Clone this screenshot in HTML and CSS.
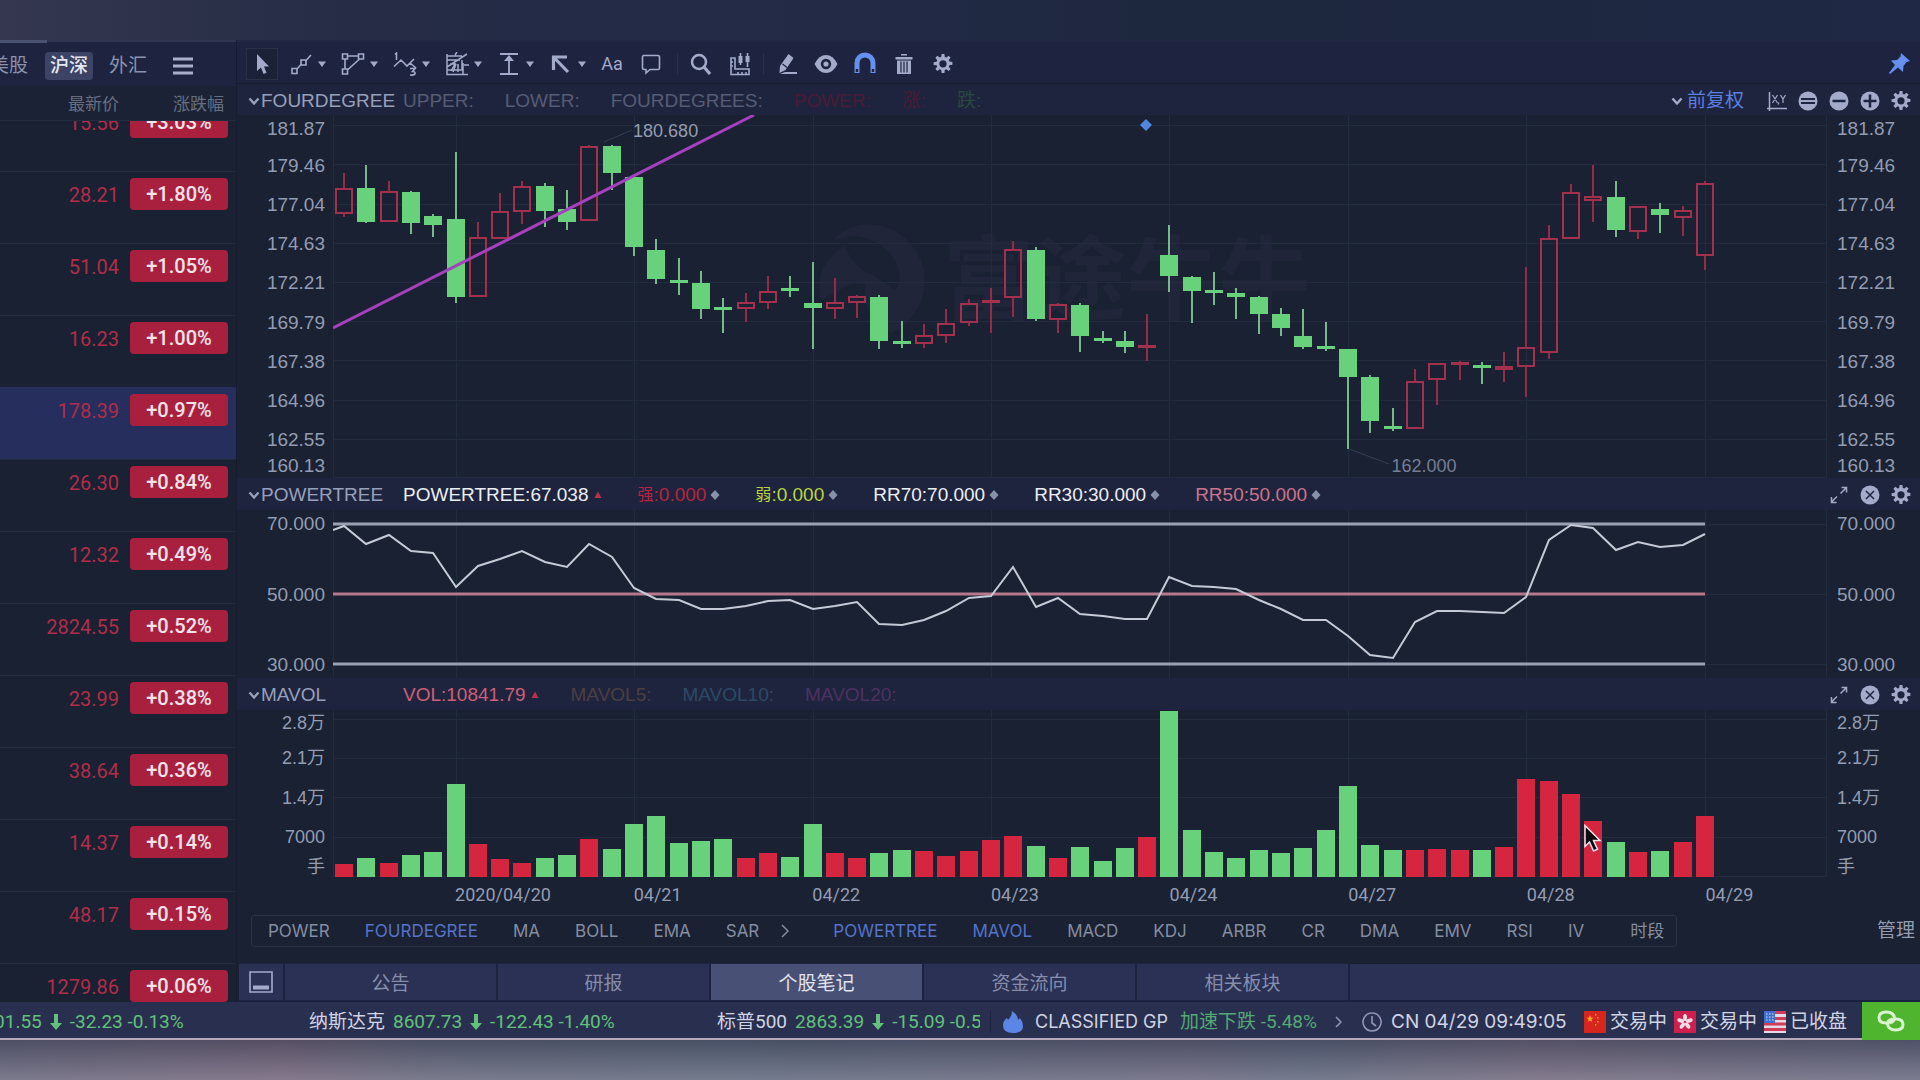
FILE: index.html
```html
<!DOCTYPE html>
<html lang="zh-CN">
<head>
<meta charset="utf-8">
<meta name="viewport" content="width=device-width, initial-scale=1">
<title>行情</title>
<link rel="stylesheet" href="styles.css">
</head>
<body>
<svg class="defs" aria-hidden="true">
  <symbol id="i-gear" viewBox="0 0 20 20"><path fill-rule="evenodd" fill="currentColor" d="M8.6 0h2.8l.4 2.9 1.5.6 2.3-1.8 2 2-1.8 2.3.7 1.6 2.9.4v2.8l-2.9.4-.7 1.6 1.8 2.3-2 2-2.3-1.8-1.5.7-.4 3H8.600l-.4-3-1.500-.7-2.300 1.800-2-2 1.800-2.300-.7-1.600L.6 11V8.200l2.900-.4.7-1.600L2.400 3.800l2-2 2.300 1.800 1.500-.7zM10 6.200a3.600 3.600 0 1 0 0 7.200 3.600 3.600 0 0 0 0-7.200z"/></symbol>
  <symbol id="i-chev" viewBox="0 0 12 10"><path d="M1.500 2.500 6 7.500l4.500-5" fill="none" stroke="currentColor" stroke-width="2.400"/></symbol>
  <symbol id="i-caret" viewBox="0 0 10 8"><path d="M1 1.500h8L5 7z" fill="currentColor"/></symbol>
  <symbol id="i-expand" viewBox="0 0 20 20"><path d="M11.500 8.500 17 3M12.500 2.500H17.500V7.500M8 11.500 2.500 17M2.500 12v5.500h5" fill="none" stroke="currentColor" stroke-width="1.500"/></symbol>
  <symbol id="i-close" viewBox="0 0 20 20"><circle cx="10" cy="10" r="9.500" fill="currentColor"/><path d="m6 6 8 8M14 6l-8 8" stroke="#1f2440" stroke-width="1.500"/></symbol>
  <symbol id="i-tri" viewBox="0 0 10 10"><path d="M5 1.500 8.500 8h-7z" fill="#b8324e"/></symbol>
  <symbol id="i-dia" viewBox="0 0 10 10"><path d="m5 0 4.500 5L5 10 .5 5z" fill="#8791a8"/></symbol>
  <symbol id="i-down" viewBox="0 0 12 18"><path d="M4 1h4v9h4l-6 7-6-7h4z" fill="currentColor"/></symbol>
</svg>

<div class="backdrop backdrop-top"></div>

<div class="app">
  <aside class="watch">
    <nav class="markets">
      <button class="market">美股</button>
      <button class="market is-on">沪深</button>
      <button class="market">外汇</button>
      <button class="menu" aria-label="菜单"><svg viewBox="0 0 20 18"><path d="M0 2h20M0 9h20M0 16h20" stroke="currentColor" stroke-width="3"/></svg></button>
    </nav>
    <div class="quotes" id="quotes">
      <table>
        <thead><tr><th>最新价</th><th class="pct">涨跌幅</th></tr></thead>
        <tbody>
          <tr><td>15.56</td><td><span class="tag">+3.03%</span></td></tr>
          <tr><td>28.21</td><td><span class="tag">+1.80%</span></td></tr>
          <tr><td>51.04</td><td><span class="tag">+1.05%</span></td></tr>
          <tr><td>16.23</td><td><span class="tag">+1.00%</span></td></tr>
          <tr class="is-on"><td>178.39</td><td><span class="tag">+0.97%</span></td></tr>
          <tr><td>26.30</td><td><span class="tag">+0.84%</span></td></tr>
          <tr><td>12.32</td><td><span class="tag">+0.49%</span></td></tr>
          <tr><td>2824.55</td><td><span class="tag">+0.52%</span></td></tr>
          <tr><td>23.99</td><td><span class="tag">+0.38%</span></td></tr>
          <tr><td>38.64</td><td><span class="tag">+0.36%</span></td></tr>
          <tr><td>14.37</td><td><span class="tag">+0.14%</span></td></tr>
          <tr><td>48.17</td><td><span class="tag">+0.15%</span></td></tr>
          <tr><td>1279.86</td><td><span class="tag">+0.06%</span></td></tr>
        </tbody>
      </table>
    </div>
  </aside>

  <main class="board">
    <div class="toolbar">
      <button class="tool pick" aria-label="选择"><svg viewBox="0 0 24 24"><path d="M7 2v17l4-3.500L13.500 22l3-1.200L14 14.500h5z" fill="currentColor"/></svg></button>
      <button class="tool drop" aria-label="线段"><svg viewBox="0 0 24 24"><g fill="none" stroke="currentColor" stroke-width="1.600"><path d="M3 16.500h5v5H3zM12 8h5v5h-5zM8 17l4-4.500M17 8.500 22 3"/></g></svg><svg class="caret"><use href="#i-caret"/></svg></button>
      <button class="tool drop" aria-label="形状"><svg viewBox="0 0 24 24"><g fill="none" stroke="currentColor" stroke-width="1.600"><path d="M1.500 2h5v5h-5zM17.500 2h5v5h-5zM1.500 17h5v5h-5zM6.500 4h11M4 7v10M6.500 18 18.500 7"/></g></svg><svg class="caret"><use href="#i-caret"/></svg></button>
      <button class="tool drop" aria-label="波浪"><svg viewBox="0 0 24 24"><path d="M1 14.500 8 8l6 6 3-3 6 5M17 11l4-4M2 2.500 3.500 1v7M17 16.500h5l-2.500 3q3 0 2.500 2-.5 2-5 1.500" fill="none" stroke="currentColor" stroke-width="1.600"/></svg><svg class="caret"><use href="#i-caret"/></svg></button>
      <button class="tool drop" aria-label="分割线"><svg viewBox="0 0 24 24"><g fill="none" stroke="currentColor" stroke-width="1.500"><path d="M2 2v20.500h21M2 4h15M2 8h13M2 18h15V8M10 3 12 0M2 15 22 2M18 22V11M19 13h5M5 12h5l-4 7M11 12l-3 8M13 12v8"/></g></svg><svg class="caret"><use href="#i-caret"/></svg></button>
      <button class="tool drop" aria-label="测量"><svg viewBox="0 0 24 24"><path d="M3 2h18M3 22h18M12 5v17" stroke="currentColor" stroke-width="1.800"/><path d="m12 3 5 6H7z" fill="currentColor"/></svg><svg class="caret"><use href="#i-caret"/></svg></button>
      <button class="tool drop" aria-label="箭头"><svg viewBox="0 0 24 24"><path d="M5 5.500 19 20M4.500 18V5H18" fill="none" stroke="currentColor" stroke-width="3.200"/></svg><svg class="caret"><use href="#i-caret"/></svg></button>
      <button class="tool text">Aa</button>
      <button class="tool note" aria-label="标注"><svg viewBox="0 0 24 24"><path d="M4 3.500h15q1.500 0 1.500 1.500v11q0 1.500-1.500 1.500h-8L7 21v-3.500H5Q3.500 17.500 3.500 16V5Q3.500 3.500 5 3.500" fill="none" stroke="currentColor" stroke-width="1.600"/></svg></button>
      <i class="split"></i>
      <button class="tool" aria-label="搜索"><svg viewBox="0 0 24 24"><circle cx="10" cy="10" r="7" fill="none" stroke="currentColor" stroke-width="2.500"/><path d="m15 15 6 7" stroke="currentColor" stroke-width="3.200"/></svg></button>
      <button class="tool" aria-label="K线测量"><svg viewBox="0 0 24 24"><path d="M3 6h4v11h14v5.500H3zM10 20v2M14 20v2M18 20v2M3 10h2M3 14h2M12.500 1v12M19.500 1v14" fill="none" stroke="currentColor" stroke-width="1.600"/><path d="M10.500 4h4v7h-4zM17.500 4h4v6h-4z" fill="currentColor"/></svg></button>
      <i class="split"></i>
      <button class="tool" aria-label="画笔"><svg viewBox="0 0 24 24"><path d="m13.500 2 5 4-8 12-6 3 .5-7zM10 20h12v2H5z" fill="currentColor"/><path d="m7.500 12 4.500 3.500" stroke="#1e2440" stroke-width="1.200"/></svg></button>
      <button class="tool" aria-label="显示"><svg viewBox="0 0 24 24"><path d="M.5 12Q5 3 12 3T23.500 12Q19 21 12 21T.5 12" fill="currentColor"/><circle cx="12" cy="12" r="5.200" fill="#1e2440"/><circle cx="12" cy="12" r="2.600" fill="currentColor"/></svg></button>
      <button class="tool magnet" aria-label="磁铁"><svg viewBox="0 0 24 24"><path d="M4 21V11a8 8 0 0 1 16 0v10" fill="none" stroke="currentColor" stroke-width="5"/><path d="M2.800 17h2.400v3H2.800zM18.800 17h2.400v3h-2.400z" fill="#1e2440"/></svg></button>
      <button class="tool" aria-label="删除"><svg viewBox="0 0 24 24"><path d="M9 2h6v1.500H9zM3.500 5h17v2.500h-17zM5 8.500h14V22H5z" fill="currentColor"/><path d="M9 9.500v11M12 9.500v11M15 9.500v11" stroke="#1e2440" stroke-width="1.200"/></svg></button>
      <button class="tool" aria-label="设置"><svg class="small"><use href="#i-gear"/></svg></button>
      <button class="tool pin" aria-label="固定"><svg viewBox="0 0 24 24"><path d="m14 1 9 8-3.500 1-3 4-.5 6-5-4.500L3 22l-1-1 6-8-4-4.500 6-.5 3.500-3.500z" fill="currentColor"/></svg></button>
    </div>

    <div class="head first">
      <button class="name"><svg><use href="#i-chev"/></svg>FOURDEGREE</button>
      <span class="dim">UPPER:</span><span class="dim">LOWER:</span><span class="dim">FOURDEGREES:</span>
      <span class="dim-red">POWER:</span><span class="dim-red">涨:</span><span class="dim-green">跌:</span>
      <div class="acts">
        <button class="adjust"><svg class="chev"><use href="#i-chev"/></svg>前复权</button>
        <button aria-label="坐标"><svg viewBox="0 0 20 20"><path d="M2.500 1v19M0 17.500h20" stroke="currentColor" stroke-width="1.500"/><path d="m5.500 4 5 8M10.500 4l-5 8M12 11.500l-1 2M13.500 4l2.500 4 2.500-4M16 8v4" fill="none" stroke="currentColor" stroke-width="1.200"/></svg></button>
        <button aria-label="还原"><svg viewBox="0 0 20 20"><circle cx="10" cy="10" r="9.500" fill="currentColor"/><path d="M3 8h14M3 12h14" stroke="#1f2440" stroke-width="1.800"/></svg></button>
        <button aria-label="缩小"><svg viewBox="0 0 20 20"><circle cx="10" cy="10" r="9.500" fill="currentColor"/><path d="M3.500 10h13" stroke="#1f2440" stroke-width="2.500"/></svg></button>
        <button aria-label="放大"><svg viewBox="0 0 20 20"><circle cx="10" cy="10" r="9.500" fill="currentColor"/><path d="M3.500 10h13M10 3.500v13" stroke="#1f2440" stroke-width="2.500"/></svg></button>
        <button aria-label="设置"><svg><use href="#i-gear"/></svg></button>
      </div>
    </div>

    <section class="panel price">
      <div class="axis left"><span>181.87</span><span>179.46</span><span>177.04</span><span>174.63</span><span>172.21</span><span>169.79</span><span>167.38</span><span>164.96</span><span>162.55</span><span>160.13</span></div>
      <div class="plot">
        <div class="mark" aria-hidden="true">
          <svg viewBox="0 0 116 116"><path fill-rule="evenodd" fill="currentColor" d="M58 0a57 57 0 0 1 22 109q-12-4-22-22-6-14-4-26-14-4-26 6L10 76Q2 40 34 22q8 22 30 30l20 14q8-8 2-26Q72 14 40 12L22 16Q38 0 58 0z"/></svg>
          <span>富途牛牛</span>
        </div>
        <svg id="candles" viewBox="0 115 1493 363" preserveAspectRatio="none"></svg>
        <span class="peak">180.680</span>
        <span class="trough">162.000</span>
      </div>
      <div class="axis"><span>181.87</span><span>179.46</span><span>177.04</span><span>174.63</span><span>172.21</span><span>169.79</span><span>167.38</span><span>164.96</span><span>162.55</span><span>160.13</span></div>
    </section>

    <div class="head values">
      <button class="name"><svg><use href="#i-chev"/></svg>POWERTREE</button>
      <span class="white">POWERTREE:67.038<svg><use href="#i-tri"/></svg></span>
      <span class="red"><b>强</b>:0.000<svg><use href="#i-dia"/></svg></span>
      <span class="lime"><b>弱</b>:0.000<svg><use href="#i-dia"/></svg></span>
      <span class="white">RR70:70.000<svg><use href="#i-dia"/></svg></span>
      <span class="white">RR30:30.000<svg><use href="#i-dia"/></svg></span>
      <span class="pink">RR50:50.000<svg><use href="#i-dia"/></svg></span>
      <div class="acts">
        <button aria-label="展开"><svg><use href="#i-expand"/></svg></button>
        <button aria-label="关闭"><svg><use href="#i-close"/></svg></button>
        <button aria-label="设置"><svg><use href="#i-gear"/></svg></button>
      </div>
    </div>

    <section class="panel power">
      <div class="axis left"><span>70.000</span><span>50.000</span><span>30.000</span></div>
      <div class="plot"><svg id="power" viewBox="0 510 1493 168" preserveAspectRatio="none"></svg></div>
      <div class="axis"><span>70.000</span><span>50.000</span><span>30.000</span></div>
    </section>

    <div class="head">
      <button class="name"><svg><use href="#i-chev"/></svg>MAVOL</button>
      <span class="vol">VOL:10841.79<svg><use href="#i-tri"/></svg></span>
      <span class="brown">MAVOL5:</span><span class="teal">MAVOL10:</span><span class="plum">MAVOL20:</span>
      <div class="acts">
        <button aria-label="展开"><svg><use href="#i-expand"/></svg></button>
        <button aria-label="关闭"><svg><use href="#i-close"/></svg></button>
        <button aria-label="设置"><svg><use href="#i-gear"/></svg></button>
      </div>
    </div>

    <section class="panel volume">
      <div class="axis left"><span>2.8万</span><span>2.1万</span><span>1.4万</span><span>7000</span><span>手</span></div>
      <div class="plot">
        <svg id="volume" viewBox="0 710 1493 167" preserveAspectRatio="none"></svg>
        <svg class="pointer" viewBox="0 0 18 28" aria-hidden="true"><path d="M1 1.500v21l4.500-4.500 4 9 4-1.800-4-8.700h6.500z" fill="#0b0b10" stroke="#e8e4ec" stroke-width="1.500"/></svg>
      </div>
      <div class="axis"><span>2.8万</span><span>2.1万</span><span>1.4万</span><span>7000</span><span>手</span></div>
    </section>

    <div class="dates"><i></i><span>2020/04/20</span><span>04/21</span><span>04/22</span><span>04/23</span><span>04/24</span><span>04/27</span><span>04/28</span><span>04/29</span></div>

    <div class="picker">
      <div class="list">
        <button>POWER</button><button class="is-on">FOURDEGREE</button><button>MA</button><button>BOLL</button><button>EMA</button><button>SAR</button>
        <button class="more" aria-label="更多"><svg viewBox="0 0 8 14"><path d="m1 1 6 6-6 6" fill="none" stroke="currentColor" stroke-width="1.500"/></svg></button>
        <button class="is-on">POWERTREE</button><button class="is-on">MAVOL</button><button>MACD</button><button>KDJ</button><button>ARBR</button><button>CR</button><button>DMA</button><button>EMV</button><button>RSI</button><button>IV</button><button class="period">时段</button>
      </div>
      <button class="manage">管理</button>
    </div>

    <nav class="tabs">
      <button class="fold" aria-label="收起"><svg viewBox="0 0 24 22"><path d="M1 1h22v20H1z" fill="none" stroke="currentColor" stroke-width="1.600"/><path d="M4 14.500h16v4H4z" fill="currentColor"/></svg></button>
      <button>公告</button><button>研报</button><button class="is-on">个股笔记</button><button>资金流向</button><button>相关板块</button>
    </nav>
  </main>

  <footer class="status">
    <div class="ticker">
      <p><span class="idx">道琼斯</span><span>24101.55</span><svg><use href="#i-down"/></svg><span>-32.23 -0.13%</span></p>
      <p><span class="idx">纳斯达克</span><span>8607.73</span><svg><use href="#i-down"/></svg><span>-122.43 -1.40%</span></p>
      <p><span class="idx">标普500</span><span>2863.39</span><svg><use href="#i-down"/></svg><span>-15.09 -0.52%</span></p>
    </div>
    <div class="alert">
      <svg class="flame" viewBox="0 0 20 22"><path d="M9 0q6 4 6 9l2-2q3 4 3 8 0 7-10 7T0 14q0-4 4-7l1 2q4-4 4-9z" fill="#5b86e6"/></svg>
      <span class="stock">CLASSIFIED GP</span><span class="drop-text">加速下跌 -5.48%</span>
    </div>
    <svg class="next" viewBox="0 0 8 14"><path d="m1 2 5 5-5 5" fill="none" stroke="currentColor" stroke-width="1.500"/></svg>
    <svg class="clock" viewBox="0 0 20 20"><path d="M10 1a9 9 0 1 0 .1 0M10 4v7l4 3" fill="none" stroke="currentColor" stroke-width="1.600"/></svg>
    <time>CN 04/29 09:49:05</time>
    <ul class="sessions">
      <li><svg viewBox="0 0 22 22"><path d="M0 0h22v22H0z" fill="#d8261f"/><path d="m6 4 1 2.500 2.500.2-2 1.600.7 2.500L6 9.500l-2.200 1.300.7-2.500-2-1.600L5 6.500z" fill="#f3a52a"/><path d="M11 3h1.500v1.500H11zM13 6h1.500v1.500H13zM13 10h1.500v1.500H13zM11 13h1.500v1.500H11z" fill="#f3a52a"/></svg>交易中</li>
      <li><svg viewBox="0 0 22 22"><path d="M0 0h22v22H0z" fill="#cf1f4e"/><g fill="#f1dfe8"><ellipse cx="11" cy="6.500" rx="2" ry="3.500"/><ellipse cx="11" cy="6.500" rx="2" ry="3.500" transform="rotate(72 11 11)"/><ellipse cx="11" cy="6.500" rx="2" ry="3.500" transform="rotate(144 11 11)"/><ellipse cx="11" cy="6.500" rx="2" ry="3.500" transform="rotate(216 11 11)"/><ellipse cx="11" cy="6.500" rx="2" ry="3.500" transform="rotate(288 11 11)"/></g></svg>交易中</li>
      <li><svg viewBox="0 0 22 22"><path d="M0 0h22v22H0z" fill="#e3dbe6"/><path d="M0 1.500h22M0 7.500h22M0 13h22M0 18.500h22" stroke="#d23a55" stroke-width="2.800"/><path d="M0 0h11v12H0z" fill="#3e6fd0"/><path d="M2 3h8M2 6h8M2 9h8" stroke="#d8def0" stroke-width="1.200" stroke-dasharray="1.500 1.500"/></svg>已收盘</li>
    </ul>
    <button class="link" aria-label="连接"><svg viewBox="0 0 28 22"><g fill="none" stroke="#d9f5cf" stroke-width="3"><path d="M17.500 8.500Q17 2 9.500 2 2 2 2 7.500 2 13 9 13q2 0 3-1"/><path d="M10.500 13.500Q11 20 18.500 20q7.500 0 7.500-5.500Q26 9 19 9q-2 0-3 1"/><path d="M17.500 7.500q0 4.500-5 5.500M10.500 14.500q0-4.500 5-5.500"/></g></svg></button>
  </footer>
</div>

<div class="backdrop backdrop-bottom"></div>
<script src="script.js"></script>
</body>
</html>
```
FILE: styles.css
```css
* { box-sizing: border-box; }

:root {
  --bg: #192132;
  --bar: #1f243e;
  --ink: #949cb2;
  --icon: #a3aaca;
  --blue: #5a7fe0;
  --green: #67d27b;
  --red: #d6263f;
  --grid: #212d3e;
  --num: "Liberation Sans", "Noto Sans CJK SC", sans-serif;
  --ui: Roboto, "Noto Sans CJK SC", sans-serif;
}

body {
  margin: 0;
  min-height: 100vh;
  display: grid;
  grid-template-rows: 40px minmax(0, 1fr) 40px;
  height: 100vh;
  background: var(--bg);
  color: var(--ink);
  font: 18px/20px var(--ui);
  overflow: hidden;
}

button {
  padding: 0;
  border: 0;
  background: none;
  color: inherit;
  font: inherit;
  white-space: nowrap;
}

svg { display: block; flex: none; }
.defs { position: absolute; width: 0; height: 0; }

.backdrop-top { background: linear-gradient(90deg, #34374f 0, #262c46 18%, #222a46 45%, #1d273d 62%, #1f2844 100%); }
.backdrop-bottom { background: linear-gradient(180deg, rgba(50, 54, 76, .6), rgba(130, 128, 146, .5)), linear-gradient(90deg, #77758a, #8c7488 15%, #74788a 22%, #68788a 38%, #77758c 62%, #6b788c 68%, #88788c 80%, #777a90); }

.app {
  display: grid;
  grid-template-columns: 237px minmax(0, 1fr);
  grid-template-rows: minmax(0, 1fr) 38px;
  min-height: 0;
}

/* Watch list */
.watch {
  display: flex;
  flex-direction: column;
  min-height: 0;
  border-right: 1px solid #161d2e;
}
.markets {
  display: flex;
  align-items: center;
  height: 46px;
  flex: none;
  gap: 12px;
  padding: 4px 0 0 45px;
  border-top: 2px solid #2f3654;
  background: #1e243f;
  position: relative;
}
.markets::before {
  content: "";
  position: absolute;
  left: 0;
  top: -2px;
  width: 47px;
  height: 3px;
  background: #4a5270;
}
.market { font-size: 19px; line-height: 28px; padding: 0 4px; border-radius: 4px; color: #8b92ac; }
.market:first-child { margin: 0 1px 0 -59px; }
.market.is-on { background: #3d4364; color: #e4e6f2; padding: 0 5px; font-weight: 500; }
.menu { color: #a9afcb; margin-left: 10px; }
.menu svg { width: 20px; height: 18px; }

.quotes { flex: 1; min-height: 0; overflow: hidden; }
.quotes table { width: 100%; border-collapse: separate; border-spacing: 0; table-layout: fixed; }
.quotes th {
  position: sticky;
  top: 0;
  z-index: 1;
  width: 119px;
  height: 35px;
  padding: 2px 0 0;
  background: #1b2235;
  border-bottom: 1px solid #222c3f;
  color: #666f82;
  font-size: 17px;
  font-weight: 400;
  text-align: right;
}
.quotes th.pct { width: auto; padding-right: 12px; }
.quotes td {
  height: 72px;
  padding: 7px 0 0;
  vertical-align: top;
  border-top: 1px solid #202b3b;
  color: #b12d4a;
  font-size: 20px;
  line-height: 32px;
  text-align: right;
}
.quotes td + td { padding: 6px 8px 0 11px; }
.tag {
  display: block;
  border-radius: 4px;
  background: #a9203f;
  color: #f6e4ea;
  font-weight: 500;
  text-align: center;
}
.quotes tr.is-on td { background: #262e5e; border-color: #262e5e; }

/* Chart board */
.board { display: flex; flex-direction: column; min-width: 0; min-height: 0; }

.toolbar {
  display: flex;
  align-items: center;
  height: 44px;
  flex: none;
  padding: 2px 9px 0;
  border-top: 2px solid #222943;
  border-bottom: 1px solid #171d30;
  background: #1e2440;
  color: var(--icon);
}
.tool { display: flex; align-items: center; justify-content: center; width: 39px; height: 32px; flex: none; }
.tool svg { width: 24px; height: 24px; }
.tool svg.small { width: 20px; height: 20px; }
.tool.pick { width: 32px; border: 1px solid #2a3145; background: #1b2136; margin-right: 6px; }
.tool.drop { width: 52px; justify-content: flex-start; padding-left: 5px; gap: 4px; }
.tool svg.caret { width: 10px; height: 8px; }
.tool.text { width: 32px; font: 18px/20px var(--ui); }
.tool.note { width: 45px; }
.tool.magnet, .tool.pin { color: #6690f0; }
.tool.pin { width: 24px; margin-left: auto; }
.split { width: 8px; height: 22px; flex: none; background: linear-gradient(#2b3250, #2b3250) center / 1px 100% no-repeat; }

.head {
  display: flex;
  align-items: center;
  gap: 31px;
  height: 32px;
  flex: none;
  padding: 2px 9px 0 11px;
  background: var(--bar);
  font: 19px/20px var(--num);
  white-space: nowrap;
}
.head.first { height: 31px; }
.head.values { gap: 35px; }
.head .name { display: flex; align-items: center; width: 155px; margin-right: -31px; gap: 1px; flex: none; color: #97a0bb; }
.head.values .name { margin-right: -35px; }
.head .name svg { width: 12px; height: 10px; }
.head span { display: flex; align-items: center; gap: 4px; }
.head span svg { width: 10px; height: 10px; }
.head b { font-size: 16px; font-weight: 400; margin-right: -4px; }
.dim { color: #555c73; }
.dim-red { color: #4a1b36; }
.dim-green { color: #28483e; }
.white { color: #eceef5; }
.red { color: #b8233f; }
.lime { color: #b7d53a; }
.pink { color: #c9748c; }
.vol { color: #cc5f79; }
.brown { color: #4b3f42; }
.teal { color: #2c4a66; }
.plum { color: #4c3262; }
.acts { display: flex; align-items: center; gap: 11px; margin-left: auto; color: var(--icon); }
.acts svg { width: 20px; height: 20px; }
.acts .adjust { display: flex; align-items: center; gap: 4px; margin-right: 12px; color: var(--blue); font-size: 19px; }
.acts .chev { width: 12px; height: 10px; color: var(--icon); }

.panel {
  display: grid;
  grid-template-columns: 96px minmax(0, 1fr) 93px;
  grid-template-rows: minmax(0, 1fr);
  min-height: 0;
}
.price { flex: 363 1 0; }
.power { flex: 168 1 0; }
.volume { flex: 167 1 0; }
.plot { position: relative; min-width: 0; border-right: 1px solid var(--grid); }
.plot > svg { width: 100%; height: 100%; }
.axis { display: flex; flex-direction: column; padding-left: 10px; font: 19px/20px var(--num); }
.axis.left { padding: 0 8px 0 0; text-align: right; }
.axis span { flex: 1; display: grid; align-content: center; min-height: 0; }
.price .axis span:first-child { flex: none; height: 31px; padding-bottom: 4px; }
.price .axis span:last-child { flex: none; height: 18px; padding-bottom: 6px; }
.power .axis { justify-content: space-between; padding-top: 4px; padding-bottom: 3px; }
.power .axis span { flex: none; }
.volume .axis span:first-child { flex: none; height: 28px; padding-bottom: 3px; }
.volume .axis span:last-child { flex: none; height: 20px; }
.volume .axis { font-size: 18px; }

.mark { position: absolute; left: 32%; top: 30%; display: flex; align-items: center; gap: 16px; color: #202539; font: 700 92px/116px var(--ui); white-space: nowrap; }
.mark svg { width: 116px; height: 116px; }
.plot > #candles { position: relative; }
.peak, .trough { position: absolute; font: 18px/20px var(--num); }
.peak { left: 20.1%; top: 6px; }
.trough { left: 70.9%; bottom: 2px; color: #757e95; }
.plot > .pointer { position: absolute; left: 83.800%; top: 114px; width: 18px; height: 28px; }

.dates { display: grid; grid-template-columns: 244fr repeat(7, 357fr) 243fr; margin: 0 93px 0 96px; height: 35px; flex: none; align-items: center; font: 18px/20px var(--ui); }

.picker { display: flex; align-items: flex-start; justify-content: space-between; height: 51px; flex: none; padding: 3px 5px 0 14px; }
.picker .list { display: flex; align-items: center; gap: 35px; height: 32px; padding: 0 12px 0 16px; border: 1px solid #2b3444; border-radius: 3px; color: #858da0; font: 17px/20px Inter, "Noto Sans CJK SC", sans-serif; }
.picker .is-on { color: #5673c8; }
.picker .more { margin: 0 9px 0 -13px; }
.picker .more svg { width: 8px; height: 14px; }
.picker .period { margin-left: 11px; }
.picker .manage { font-size: 19px; line-height: 32px; }

.tabs { display: flex; height: 39px; flex: none; gap: 2px; padding-left: 2px; border-top: 1px solid #161d2e; border-bottom: 2px solid #182040; background: linear-gradient(#2a3155, #2a3155) content-box; }
.tabs button { width: 211px; padding-top: 4px; background: #2a3155; box-shadow: 1px 0 0 1px #1b2341; color: #858dab; font-size: 19px; }
.tabs .fold { display: grid; place-items: center; width: 44px; padding: 0; color: #a3aaca; }
.tabs .fold svg { width: 24px; height: 22px; }
.tabs .is-on { background: #495076; color: #e2e4f0; }

/* Status bar */
.status {
  grid-column: 1 / -1;
  display: flex;
  align-items: center;
  min-width: 0;
  padding-top: 3px;
  background: #29304f;
  border-bottom: 2px solid #b7a9bd;
  color: #d0d4e4;
  white-space: nowrap;
}
.ticker { display: flex; flex: none; width: 980px; overflow: hidden; }
.ticker p { display: flex; align-items: center; gap: 8px; flex: none; width: 408px; margin: 0; color: #62c07c; font-size: 19px; }
.ticker p:first-child { margin-left: -103px; width: 412px; }
.ticker svg { width: 12px; height: 18px; }
.idx { color: #d0d4e4; }
.alert { display: flex; align-items: center; margin-left: 10px; padding-left: 12px; border-left: 1px solid #1c2440; }
.flame { width: 20px; height: 22px; margin-right: 12px; }
.stock { width: 145px; font: 18px/20px Inter, sans-serif; }
.drop-text { color: #52a873; width: 140px; font-size: 19px; }
.next { width: 8px; height: 14px; margin-left: 15px; color: #8f97b5; }
.clock { width: 20px; height: 20px; margin: 0 9px 0 19px; color: #8f97b5; }
.status time { width: 184px; font: 19px/20px Inter, sans-serif; }
.sessions { display: flex; gap: 7px; margin: 0 0 0 9px; padding: 0; list-style: none; font-size: 19px; }
.sessions li { display: flex; align-items: center; gap: 4px; }
.sessions svg { width: 22px; height: 22px; }
.link { display: grid; place-items: center; width: 58px; height: 38px; margin: -3px 0 -2px auto; flex: none; background: #4fb52f; }
.link svg { width: 28px; height: 22px; }

/* Drawn series */
.grid { stroke: var(--grid); }
.up { fill: none; stroke: #a3304c; stroke-width: 2; }
.down { fill: var(--green); stroke: none; }
.wick-down { stroke: #76b98a; stroke-width: 2; }
.wick-up { stroke: #942b48; stroke-width: 2; }
.bar-up { fill: var(--red); }
.bar-down { fill: var(--green); }
.trend { stroke: #a740bd; stroke-width: 3; }
.leader { stroke: #343e50; }
.level { stroke: #9aa1b3; stroke-width: 3; }
.level.mid { stroke: #b8788c; }
.curve { fill: none; stroke: #c5cad6; stroke-width: 2; }
.event { fill: #4f86df; }
```
FILE: script.js
```js
// Each bar: direction, high, body top, body bottom, low, volume top.
const bars = `r 173 188 214 217 864;g 165 188 222 223 858;r 181 191 222 222 863;g 191 192 223 234 855;g 214 216 225 237 852
g 152 219 297 303 784;r 222 237 297 297 844;r 193 211 239 239 859;r 181 186 212 224 863;g 183 186 211 227 858
g 190 209 222 230 855;r 145 146 221 221 839;g 145 146 173 190 849;g 177 177 247 256 824;g 239 250 279 284 816
g 258 280 283 295 843;g 271 283 309 319 841;g 298 307 309 333 839;r 293 302 309 322 858;r 276 291 303 309 853
g 276 288 290 297 857;g 262 303 308 349 824;r 278 302 309 319 853;r 295 296 303 318 858;g 295 297 341 349 853
g 321 341 344 348 850;r 324 335 344 348 851;r 309 323 336 343 856;r 299 303 323 326 851;r 288 300 303 333 840
r 241 249 298 317 836;g 247 250 319 321 846;r 303 304 320 333 858;g 303 305 336 352 847;g 331 338 340 343 861
g 331 341 347 353 848;r 314 345 347 361 837;g 225 255 276 292 711;g 276 277 291 323 830;g 272 290 292 305 852
g 288 293 297 319 858;g 296 297 314 334 850;g 308 314 328 336 853;g 309 336 347 349 848;g 322 346 348 351 830
g 349 349 377 449 786;g 375 377 421 433 845;g 408 426 428 431 850;r 369 381 429 429 850;r 363 363 380 405 849
r 361 362 364 380 850;g 362 365 367 384 850;r 352 366 370 382 847;r 267 347 367 397 779;r 225 238 353 359 781
r 184 192 239 239 794;r 165 196 201 222 821;g 181 197 230 237 842;r 206 206 232 239 852;g 203 209 215 233 851
r 206 210 218 236 842;r 181 183 256 270 816`.split(/[;\n]/).map(s => {
  const [dir, ...n] = s.trim().split(" ");
  return [dir === "r", ...n.map(Number)];
});

const power = [526, 544, 535, 551, 553, 587, 566, 559, 551, 562, 567, 544, 557, 588, 599, 600, 609, 609, 606, 601, 600,
  609, 606, 602, 624, 625, 620, 611, 598, 596, 567, 607, 598, 614, 616, 619, 619, 577, 586, 587, 589, 600, 609, 620, 620,
  636, 655, 658, 622, 611, 611, 612, 613, 597, 540, 525, 528, 550, 542, 547, 545, 534];

const width = 1493;
const x = i => Math.round(11 + i * 22.31);
const line = (cls, x1, y1, x2, y2) => `<line class="${cls}" x1="${x1}" y1="${y1}" x2="${x2}" y2="${y2}"/>`;
const rect = (cls, left, top, w, h) => `<rect class="${cls}" x="${left}" y="${top}" width="${w}" height="${h}"/>`;

function grid(top, bottom, rows) {
  let out = line("grid", 0.5, top, 0.5, bottom);
  rows.forEach(y => { out += line("grid", 0, y + 0.5, width, y + 0.5); });
  for (let i = 5; i < bars.length; i += 8) out += line("grid", x(i) + 0.5, top, x(i) + 0.5, bottom);
  return out;
}

let candles = grid(115, 478, [125, 164, 204, 243, 282, 321, 360, 400, 439, 477]);
candles += line("leader", 271, 142, 299, 130) + line("leader", 1016, 449, 1056, 464);
bars.forEach(([up, high, top, bottom, low], i) => {
  const cx = x(i);
  const wick = up ? "wick-up" : "wick-down";
  candles += line(wick, cx, high, cx, top) + line(wick, cx, bottom, cx, low);
  candles += up
    ? rect("up", cx - 8, top + 1, 16, Math.max(bottom - top - 2, 1))
    : rect("down", cx - 9, top, 18, Math.max(bottom - top, 3));
});
candles += line("trend", 0, 328, 421, 115) + '<path class="event" d="m813 119 6 6-6 6-6-6z"/>';
document.getElementById("candles").innerHTML = candles;

const end = x(bars.length - 1);
document.getElementById("power").innerHTML = grid(510, 678, [524, 594, 664]) +
  line("level", 0, 524, end, 524) + line("level mid", 0, 594, end, 594) + line("level", 0, 664, end, 664) +
  `<polyline class="curve" points="0,530 ${power.map((y, i) => x(i) + "," + y).join(" ")}"/>`;

document.getElementById("volume").innerHTML = grid(710, 877, [719, 758, 797, 837, 876]) +
  bars.map((b, i) => rect(b[0] ? "bar-up" : "bar-down", x(i) - 9, b[5], 18, 877 - b[5])).join("");

// The list opens part-way through its first row.
document.getElementById("quotes").scrollTop = 22;
```
